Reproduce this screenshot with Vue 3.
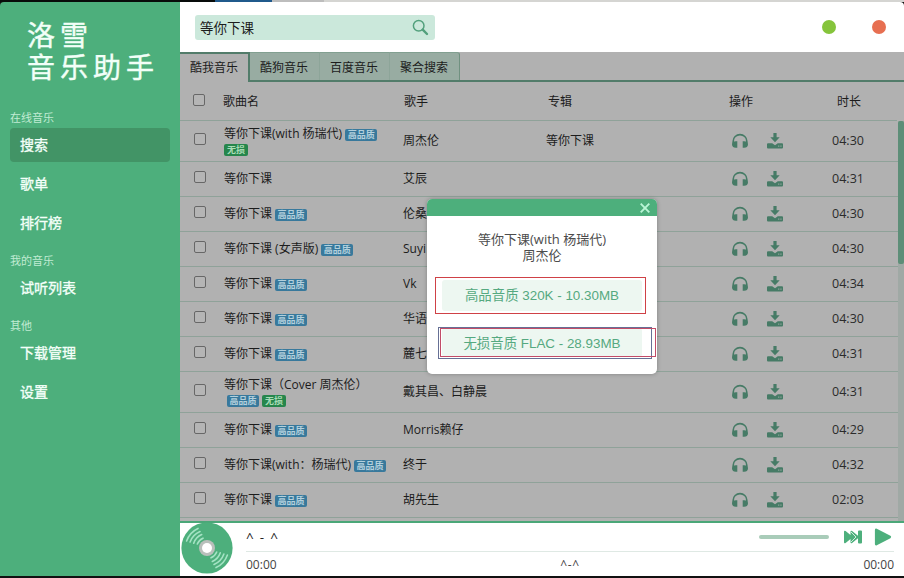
<script setup>
const menu = [
  { title: '在线音乐', items: ['搜索', '歌单', '排行榜'] },
  { title: '我的音乐', items: ['试听列表'] },
  { title: '其他', items: ['下载管理', '设置'] },
]
const tabs = ['酷我音乐', '酷狗音乐', '百度音乐', '聚合搜索']
const songs = [
  { name: '等你下课(with 杨瑞代)', hq: true, sq: true, wrap: 'sq', singer: '周杰伦', album: '等你下课', time: '04:30' },
  { name: '等你下课', singer: '艾辰', time: '04:31' },
  { name: '等你下课', hq: true, singer: '伦桑', time: '04:30' },
  { name: '等你下课 (女声版)', hq: true, singer: 'Suyi', time: '04:30' },
  { name: '等你下课', hq: true, singer: 'Vk', time: '04:34' },
  { name: '等你下课', hq: true, singer: '华语', time: '04:30' },
  { name: '等你下课', hq: true, singer: '麓七', time: '04:31' },
  { name: '等你下课（Cover 周杰伦）', hq: true, sq: true, wrap: 'all', singer: '戴其昌、白静晨', time: '04:31' },
  { name: '等你下课', hq: true, singer: 'Morris赖仔', time: '04:29' },
  { name: '等你下课(with：杨瑞代)', hq: true, singer: '终于', time: '04:32' },
  { name: '等你下课', hq: true, singer: '胡先生', time: '02:03' },
]
</script>

<template>
  <div class="desktop">
    <div class="strip"><i class="s-black"></i><i class="s-blue"></i><i class="s-mid"></i><i class="s-gray"></i></div>
    <div class="window">
      <aside class="side">
        <div class="logo"><div>洛雪</div><div>音乐助手</div></div>
        <nav>
          <section v-for="group in menu" :key="group.title">
            <h4>{{ group.title }}</h4>
            <a v-for="item in group.items" :key="item" :class="{ active: item === '搜索' }">{{ item }}</a>
          </section>
        </nav>
      </aside>

      <main class="main">
        <header class="top">
          <div class="search">
            <span>等你下课</span>
            <svg width="17" height="17" viewBox="0 0 17 17" fill="none" stroke="#52a07c">
              <circle cx="6.700" cy="6.700" r="5.300" stroke-width="1.500" />
              <path d="M10.700 10.700 15 15" stroke-width="2.400" stroke-linecap="round" />
            </svg>
          </div>
          <div class="dots"><i class="green"></i><i class="red"></i></div>
        </header>

        <div class="content">
          <div class="tabs">
            <span v-for="(tab, i) in tabs" :key="tab" class="tab" :class="{ on: i === 0 }">{{ tab }}</span>
          </div>
          <div class="row thead">
            <span class="check"><i class="box"></i></span>
            <span class="name">歌曲名</span>
            <span class="singer">歌手</span>
            <span class="album">专辑</span>
            <span class="ops">操作</span>
            <span class="time">时长</span>
          </div>
          <div class="body">
            <div class="list">
              <div v-for="(s, i) in songs" :key="i" class="row" :class="{ tall: s.wrap }">
                <span class="check"><i class="box"></i></span>
                <div class="name">
                  <div class="line">
                    <span>{{ s.name }}</span>
                    <b v-if="s.hq && s.wrap !== 'all'" class="hq">高品质</b>
                  </div>
                  <div v-if="s.wrap" class="badges" :class="{ indent: s.wrap === 'all' }">
                    <b v-if="s.wrap === 'all'" class="hq">高品质</b>
                    <b class="sq">无损</b>
                  </div>
                </div>
                <span class="singer">{{ s.singer }}</span>
                <span class="album">{{ s.album }}</span>
                <span class="ops">
                  <svg width="16" height="16" viewBox="0 0 16 16">
                    <path d="M1.200 10.500V8.200a6.800 6.600 0 0 1 13.600 0V10.500" fill="none" stroke="#467b66" stroke-width="1.600" />
                    <path d="M5.300 8.300v6.500H3.800C1.500 14.800 0 13.500 0 11.500S1.500 8.300 3.800 8.300ZM10.700 8.300v6.500h1.500c2.300 0 3.800-1.300 3.800-3.300s-1.500-3.200-3.800-3.200Z" fill="#467b66" />
                  </svg>
                  <svg width="16" height="16" viewBox="0 0 16 16" fill="#467b66">
                    <path d="M6.400 0h3.200v4.300h3.100L8 9.200 3.300 4.300h3.100Z" />
                    <path d="M1 10.300h4.200L8 12.200l2.800-1.900H15a1 1 0 0 1 1 1V14.500a1 1 0 0 1-1 1H1a1 1 0 0 1-1-1v-3.200a1 1 0 0 1 1-1Z" />
                    <path d="M11.200 12.600h1.100v1.100h-1.100Zm2.200 0h1.100v1.100h-1.100Z" fill="#9aaaa3" />
                  </svg>
                </span>
                <span class="time">{{ s.time }}</span>
              </div>
            </div>
            <div class="scroll"><i></i></div>
          </div>

          <div class="modal">
            <div class="bar">
              <svg width="10" height="10" viewBox="0 0 10 10"><path d="M.7.7l8.600 8.600M9.300.7L.7 9.300" stroke="#b9f6d6" stroke-width="1.900" /></svg>
            </div>
            <div class="info"><div>等你下课(with 杨瑞代)</div><div>周杰伦</div></div>
            <button class="q1">高品音质 320K - 10.30MB</button>
            <button class="q2">无损音质 FLAC - 28.93MB</button>
            <i class="mark m1"></i><i class="mark m2"></i><i class="mark m3"></i>
          </div>
        </div>

        <footer class="player">
          <svg class="disc" width="52" height="52" viewBox="0 0 52 52">
            <circle cx="26" cy="26" r="25.600" fill="#4daf7c" />
            <g fill="none" stroke="#a5e3c4" stroke-width="1.600" stroke-linecap="round">
              <path d="M5.600 19A21.600 21.600 0 0 1 17 6.400M9.100 20A18 18 0 0 1 19 9.500M12.700 21.300A14.400 14.400 0 0 1 20.700 12.600M16.300 22A10.800 10.800 0 0 1 22 16.200" />
              <path d="M46.400 33A21.600 21.600 0 0 1 35 45.600M42.900 32A18 18 0 0 1 33 42.500M39.300 30.700A14.400 14.400 0 0 1 31.300 39.400M35.700 30A10.800 10.800 0 0 1 30 35.800" />
            </g>
            <circle cx="26" cy="26" r="8" fill="#b9bfbb" />
            <circle cx="26" cy="26" r="5" fill="#fff" />
          </svg>
          <div class="panel">
            <div class="upper">
              <span class="song">^ - ^</span>
              <i class="volume"></i>
              <svg class="next" width="20" height="16" viewBox="0 0 20 16" fill="#4daf7c">
                <path d="M1 3Q1 1 2.600 2L7.500 6V3Q7.500 1 9.100 2L15 6.800V2.500Q15 1.500 16 1.500H18Q19 1.500 19 2.500V13.500Q19 14.500 18 14.500H16Q15 14.500 15 13.500V9.200L9.100 14Q7.500 15 7.500 13V10L2.600 14Q1 15 1 13Z" />
                <path d="M8 3 13 8 8 13" fill="none" stroke="#e2f3e9" stroke-width=".9" />
              </svg>
              <svg class="play" width="18" height="18" viewBox="0 0 18 18"><path d="M2.200 1.900 15.800 9 2.200 16.100Z" fill="#4daf7c" stroke="#4daf7c" stroke-width="2.600" stroke-linejoin="round" /></svg>
            </div>
            <div class="progress"></div>
            <div class="lower"><span>00:00</span><span class="lyric">^-^</span><span>00:00</span></div>
          </div>
        </footer>
      </main>
    </div>
  </div>
</template>

<style>
body { margin: 0; overflow: hidden; }
</style>

<style scoped>
* { box-sizing: border-box; }
.desktop { width: 904px; height: 578px; background: #111; font: 12px/16px "Open Sans", "Noto Sans CJK SC", sans-serif; color: #1c1c1c; display: flex; flex-direction: column; padding-bottom: 2px; }
.strip { height: 2px; display: flex; flex: none; }
.s-black { width: 215px; background: #080c0a; }
.s-blue { width: 57px; background: #205a8c; }
.s-mid { width: 52px; background: #bdbdbd; }
.s-gray { flex: 1; background: #d5d5d2; }
.window { flex: 1; display: flex; min-height: 0; border-radius: 4px 4px 0 0; overflow: hidden; }
.side { width: 180px; flex: none; background: #4daf7c; color: #f4fff9; }
.logo { height: 103px; padding: 16px 0 0 27px; font-family: "Noto Sans CJK SC", sans-serif; font-size: 28px; line-height: 32px; letter-spacing: 5px; color: #f2fff8; -webkit-text-stroke: .4px #f2fff8; }
nav { padding: 0 10px; }
h4 { margin: 0; padding-top: 5px; height: 23px; font-size: 11px; line-height: 16px; font-weight: 400; color: #c0ebd3; }
section + section h4 { padding-top: 8px; height: 26px; }
nav a { display: block; height: 34px; margin-bottom: 5px; padding-left: 10px; border-radius: 4px; font-size: 14px; line-height: 33px; -webkit-text-stroke: .35px #f4fff9; }
nav a.active { background: #429466; }
.main { flex: 1; display: flex; flex-direction: column; min-width: 0; background: #fff; }
.top { height: 50px; flex: none; display: flex; justify-content: space-between; align-items: center; padding: 0 18px 0 15px; }
.search { width: 240px; height: 25px; background: #cbe8db; border-radius: 3px; display: flex; align-items: center; justify-content: space-between; padding: 1px 6px 0 5px; font-size: 13.500px; line-height: 20px; }
.dots { display: flex; gap: 36px; }
.dots i { width: 14px; height: 14px; border-radius: 50%; }
.green { background: #85c43b; }
.red { background: #e76f51; }
.content { position: relative; flex: 1; min-height: 0; background: #b1b1b1; border-bottom: 2px solid #4ba778; display: flex; flex-direction: column; }
.tabs { height: 30px; flex: none; display: flex; border-bottom: 2px solid #527c6a; }
.tab { width: 70px; height: 28px; background: #98aca2; border-right: 1px solid #8da599; border-top: 1px solid #82a091; text-align: center; line-height: 30px; padding-right: 1px; }
.tab:last-child { border-right-color: #709180; border-top-right-radius: 3px; }
.tab.on { height: 30px; background: #b1b1b1; border-top: 2px solid #527c6a; border-right: 2px solid #527c6a; line-height: 28px; padding-right: 0; }
.row { height: 35px; display: flex; align-items: center; border-bottom: 1px solid #8fa299; }
.row.tall { height: 41px; }
.thead { height: 39px; flex: none; margin-right: 7px; padding-top: 2px; }
.check { width: 43px; padding-left: 14px; flex: none; }
.box { display: block; width: 12px; height: 12px; border: 1px solid #676767; border-radius: 2px; background: #b5b5b5; margin-top: -4px; }
.thead .check { padding-left: 13px; }
.name { width: 180px; flex: none; white-space: nowrap; }
.line { display: flex; align-items: center; gap: 3px; height: 16px; padding-left: 1px; }
.badges { display: flex; gap: 3px; height: 16px; align-items: center; padding-left: 1px; }
.tall .name { padding-top: 1px; }
.tall .line b { margin-top: 2px; }
.badges.indent { padding-left: 4px; }
b { display: block; height: 12px; padding: 0 3px; border-radius: 2px; color: #b3d0dd; font: 700 9px/11px "Noto Sans CJK SC", sans-serif; }
.hq { width: 32px; padding: 0 2.500px; background: #38799c; }
.line b { margin-top: 2px; }
.sq { width: 24px; background: #26864c; color: #a9dcb7; }
.singer { width: 143px; flex: none; }
.album { width: 180px; flex: none; }
.thead .singer { padding-left: 1px; }
.thead .album { padding-left: 2px; }
.ops { width: 90px; flex: none; display: flex; gap: 19px; padding-left: 6px; }
.thead .ops { padding-left: 3px; }
.time { width: 64px; text-align: center; color: #2b2b2b; font-size: 12.500px; }
.thead .time { padding-left: 2px; color: #1c1c1c; font-size: 12px; }
.body { flex: 1; display: flex; min-height: 0; overflow: hidden; }
.list { flex: 1; }
.scroll { width: 6px; background: #a0a9a5; }
.scroll i { display: block; height: 143px; background: #5d8e78; border-radius: 2px; }
.modal { position: absolute; left: 247px; top: 147px; width: 230px; height: 175px; border-radius: 5px; background: #fff; box-shadow: 0 0 4px #0004; }
.bar { height: 17px; background: #4daf7c; border-radius: 5px 5px 0 0; display: flex; justify-content: flex-end; align-items: center; padding-right: 7px; }
.info { padding-top: 15px; height: 64px; text-align: center; font-size: 13px; line-height: 16px; color: #4c4c4c; }
button { display: block; width: 200px; margin: 0 auto; padding: 0; border: 0; border-radius: 3px; background: #edf7f1; color: #55a980; font: 13.400px/30px "Liberation Sans", "Noto Sans CJK SC", sans-serif; }
.q1 { height: 31px; }
.q2 { height: 29px; margin-top: 17px; padding-top: 1px; }
.mark { position: absolute; border: 1px solid #cf4146; pointer-events: none; }
.m1 { left: 8px; top: 78px; width: 211px; height: 37px; }
.m2 { left: 11px; top: 128px; width: 214px; height: 32px; border-color: #667095; }
.m3 { left: 13px; top: 129px; width: 216px; height: 29px; border-color: #c24c68; }
.player { height: 53px; flex: none; display: flex; padding-right: 10px; }
.disc { margin-left: 1px; margin-top: -1px; flex: none; position: relative; }
.panel { flex: 1; padding-left: 13px; }
.upper { height: 28px; display: flex; align-items: center; }
.song { flex: 1; font-size: 13.500px; letter-spacing: 1.300px; }
.volume { width: 70px; height: 4px; border-radius: 2px; background: #a9ccb9; margin-right: 14px; }
.next { margin-right: 11px; }
.play { margin-right: 2px; }
.progress { height: 1px; background: #dfe9e4; }
.lower { height: 24px; display: flex; justify-content: space-between; align-items: center; font-size: 12px; color: #444; padding-top: 2px; }
.lyric { font-size: 12px; letter-spacing: .7px; }
</style>
